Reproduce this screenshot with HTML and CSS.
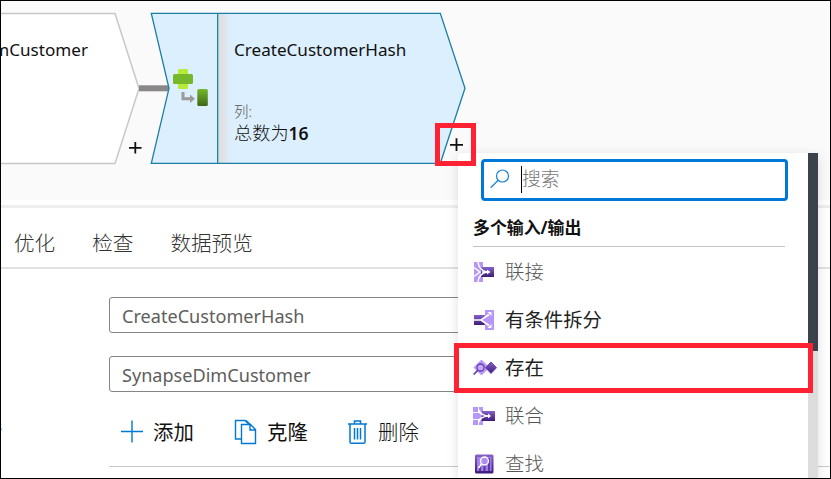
FILE: index.html
```html
<!DOCTYPE html>
<html lang="zh-CN">
<head>
<meta charset="utf-8">
<title>Data flow</title>
<link rel="stylesheet" href="styles.css">
</head>
<body>
<main class="app">
  <section class="canvas">
    <svg class="shapes" width="831" height="200" viewBox="0 0 831 200">
      <defs>
        <linearGradient id="edge"><stop offset="0" stop-color="#dedede"/><stop offset="1" stop-color="#dceffe"/></linearGradient>
        <linearGradient id="leaf" x2="0" y2="1"><stop offset="0" stop-color="#76b82a"/><stop offset="1" stop-color="#3c6818"/></linearGradient>
      </defs>
      <path d="M-4 13.5H115L139 88.5 115 163.5H-4z" fill="#fff" stroke="#c8c8c8" stroke-width="1.5"/>
      <path d="M139 88.3H169" stroke="#898887" stroke-width="6"/>
      <path d="M151.3 13.3H440.3L465 88.3 440.3 163.3H151.3L169 88.3z" fill="#dceffe"/>
      <path d="M219 14H232V163H219z" fill="url(#edge)"/>
      <path d="M151.3 13.3H440.3L465 88.3 440.3 163.3H151.3L169 88.3zM217.7 13V163" fill="none" stroke="#1b7ea3" stroke-width="1.3"/>
      <rect x="178" y="69" width="10" height="20" rx="1.5" fill="#b4ec36"/>
      <rect x="173" y="74" width="20" height="10" rx="1.5" fill="#76b82a"/>
      <path d="M183 92V98.7H191" fill="none" stroke="#9b9b9b" stroke-width="3"/>
      <path d="M190 94.5L195 98.7 190 103z" fill="#9b9b9b"/>
      <rect x="197.3" y="89" width="10.5" height="17" rx="1.5" fill="url(#leaf)"/>
      <path d="M129 147.8H141.5M135.3 142V153.6M450 144.8H463M456.5 138.3V151" stroke="#111" stroke-width="1.8"/>
    </svg>
    <div class="node source">mCustomer</div>
    <div class="node hash">
      <div class="title">CreateCustomerHash</div>
      <div class="caption">列:</div>
      <div class="total">总数为<b>16</b></div>
    </div>
  </section>

  <section class="panel">
    <nav class="tabs"><span>优化</span><span>检查</span><span>数据预览</span></nav>
    <div class="form">
      <div class="field">CreateCustomerHash</div>
      <div class="field">SynapseDimCustomer</div>
      <div class="actions">
        <span class="label">s</span>
        <span class="action add"><svg width="24" height="24" viewBox="0 0 24 24"><path d="M1 12.5H23M12 1.5V23.5" stroke="#0078d7" stroke-width="1.4"/></svg>添加</span>
        <span class="action clone"><svg width="24" height="26" viewBox="0 0 24 26" fill="none" stroke="#0078d7" stroke-width="1.4"><path d="M7 20H1.5V1.5H11L14 4.500"/><path d="M7.500 5.500H16.500L21.500 10.500V24.500H7.500zM16 5.500V11H21.500M12 1.500L18 7"/></svg>克隆</span>
        <span class="action remove"><svg width="20" height="26" viewBox="0 0 20 26" fill="none" stroke="#0078d7" stroke-width="1.5"><path d="M0 5H19M6.500 5V2H12.500V5M2 5V23Q2 24.300 3.300 24.300H15.700Q17 24.300 17 23V5M6.500 9V20.500M9.500 9V20.500M12.500 9V20.500"/></svg>删除</span>
      </div>
    </div>
  </section>

  <aside class="menu">
    <div class="menu-body">
      <div class="search"><svg width="20" height="20" viewBox="0 0 20 20" fill="none" stroke="#1683d8" stroke-width="1.2"><circle cx="12.500" cy="7" r="6"/><path d="M8.200 11.300L.6 18.800"/></svg><span>搜索</span></div>
      <h2>多个输入/输出</h2>
      <ul>
        <li class="muted">
          <svg width="24" height="22" viewBox="0 0 24 22">
            <defs><linearGradient id="pv" x2="0" y2="1"><stop offset="0" stop-color="#8661c9"/><stop offset="1" stop-color="#3d1b78"/></linearGradient></defs>
            <path d="M1 1H10V21H1z" fill="#b796f9"/><path d="M8 6H21V16H8z" fill="url(#pv)"/><path d="M1 6.500L7 11 1 15.500M5 1Q6 9.500 14 11Q6 12.500 5 21" fill="none" stroke="#fff" stroke-width="1.500"/><path d="M9 11H15" stroke="#fff" stroke-width="1.500"/><path d="M14 8.500L17.500 11 14 13.500z" fill="#fff"/>
          </svg>联接</li>
        <li>
          <svg width="24" height="22" viewBox="0 0 24 22"><path d="M1 6H13V16H1z" fill="url(#pv)"/><path d="M12 1H21V21H12V16L10 11 12 6z" fill="#b796f9"/><path d="M1 11H8L16 5.500M8 11L16 16.500" fill="none" stroke="#fff" stroke-width="1.700"/><path d="M14.500 3H18.500V7zM14.500 19H18.500V15z" fill="#fff"/></svg>有条件拆分</li>
        <li>
          <svg width="24" height="22" viewBox="0 0 24 22"><path d="M8.500 3L16 10.500 8.500 18 1 10.500z" fill="#b796f9" stroke="#b796f9" stroke-linejoin="round"/><path d="M18 5L23.500 10.700 18 16.500 12.500 10.700z" fill="url(#pv)" stroke="#6b46ab" stroke-width="1" stroke-linejoin="round"/><circle cx="7.500" cy="10.500" r="3.500" fill="#c5a7fb" stroke="#6541a7" stroke-width="1.300"/><path d="M5 13.200L.7 17.500" stroke="#6541a7" stroke-width="1.700"/></svg>存在</li>
        <li class="muted">
          <svg width="24" height="22" viewBox="0 0 24 22"><path d="M0 2H5V7H0zM6 2H10V9L6 6zM0 8H6L9 11 6 14H0zM0 15H5V20H0zM6 16L10 13V20H6z" fill="#b796f9"/><path d="M8.500 6H22V16H8.500z" fill="url(#pv)"/><path d="M6 5Q8 11 16 11Q8 11 6 17" fill="none" stroke="#fff" stroke-width="1.500"/><path d="M15 8.500L18 11 15 13.500z" fill="#fff"/></svg>联合</li>
        <li class="muted">
          <svg width="24" height="22" viewBox="0 0 24 22"><rect x="2" y="1.500" width="18.500" height="19" rx="1.500" fill="url(#pv)"/><path d="M4 4H18.500V18H4z" fill="#a583eb"/><path d="M7 12V18M11.500 6V18M16 5V18" stroke="#6038a6" stroke-width="2.200"/><circle cx="11.500" cy="8" r="4" fill="#b796f9" fill-opacity=".85" stroke="#fff" stroke-width="1.400"/><path d="M8.500 11L5.500 15" stroke="#fff" stroke-width="1.700"/></svg>查找</li>
      </ul>
    </div>
    <div class="track"><div class="thumb"></div></div>
  </aside>
  <div class="mark mark-add"></div>
  <div class="mark mark-exists"></div>
</main>
</body>
</html>
```

FILE: styles.css
```css
* { box-sizing: border-box; }
body { margin: 0; }
.app {
  position: relative;
  width: 831px;
  height: 479px;
  overflow: hidden;
  background: #fff;
  color: #111;
  font-family: "Noto Sans", "Noto Sans CJK SC", sans-serif;
}
.app::after {
  content: "";
  position: absolute;
  inset: 0;
  border: 1px solid #000;
  z-index: 5;
}
svg { display: block; flex: none; }

/* Diagram */
.canvas { position: relative; height: 200px; background: #fafafa; }
.node { position: absolute; white-space: nowrap; line-height: 24px; font-size: 17.1px; }
.source { right: 743px; top: 38px; }
.hash { left: 234px; top: 38px; }
.caption { margin-top: 38px; font-size: 14.5px; line-height: 22px; color: #555; font-weight: 300; }
.total { font-size: 18.2px; line-height: 24px; margin-top: -1px; font-weight: 300; }
.total b { font-weight: 600; font-size: 17.5px; }

/* Settings */
.panel { margin-top: 5px; border-top: 3px solid #eee; }
.tabs {
  display: flex;
  gap: 37px;
  height: 61px;
  padding: 20px 0 0 14px;
  border-bottom: 2px solid #e1e1e1;
  font-size: 20.6px;
  line-height: 30px;
  font-weight: 300;
  color: #333;
}
.form { padding: 28px 0 0 109px; }
.field {
  width: 500px;
  height: 36px;
  margin-bottom: 23px;
  padding-left: 12px;
  border: 1px solid #858585;
  border-radius: 3px;
  font-size: 18.1px;
  line-height: 36px;
  color: #605e5c;
}
.actions {
  position: relative;
  display: flex;
  align-items: center;
  height: 52px;
  border-bottom: 1px solid #c8c8c8;
  font-size: 20.4px;
}
.label { position: absolute; left: -115px; top: 0; font-size: 16px; font-weight: 600; }
.action { display: flex; align-items: center; gap: 9px; height: 30px; margin-top: -17px; line-height: 30px; }
.add { width: 125px; padding-left: 11px; }
.add svg { margin-top: -2px; }
.clone { width: 114px; }
.remove { font-weight: 300; gap: 10px; }

/* Transformation picker */
.menu {
  position: absolute;
  left: 458px;
  top: 153px;
  display: flex;
  width: 360px;
  height: 326px;
  background: #fff;
  border-radius: 4px 0 0 0;
  box-shadow: 0 3px 12px rgba(0, 0, 0, .13);
}
.menu-body { flex: 1; overflow: hidden; padding: 6px 23px 0 15px; }
.track { width: 10px; background: #ddd; }
.thumb { height: 198px; background: #3b424c; }
.search {
  display: flex;
  align-items: center;
  width: 307px;
  height: 42px;
  margin-left: 8px;
  padding-left: 6px;
  border: 3px solid #0078d7;
  border-radius: 4px;
  color: #777;
  font-size: 18.8px;
  font-weight: 300;
}
.search svg { margin-top: -3px; }
.search span { margin: -2px 0 0 11px; border-left: 1px solid #000; line-height: 27px; }
h2 {
  height: 46px;
  margin: 0;
  padding-top: 14px;
  border-bottom: 1px solid #c4c4c4;
  font-size: 16.9px;
  line-height: 25px;
  font-weight: 700;
}
ul { margin: 1px 0 0; padding: 0; list-style: none; }
li { display: flex; align-items: center; gap: 8px; height: 48px; font-size: 19.4px; line-height: 28px; color: #222; }
.muted { color: #555; font-weight: 300; }

/* Highlights */
.mark { position: absolute; border: 5px solid #ff2233; z-index: 3; }
.mark-add { left: 435px; top: 123px; width: 41px; height: 43px; }
.mark-exists { left: 454px; top: 343px; width: 359px; height: 50px; }
```
